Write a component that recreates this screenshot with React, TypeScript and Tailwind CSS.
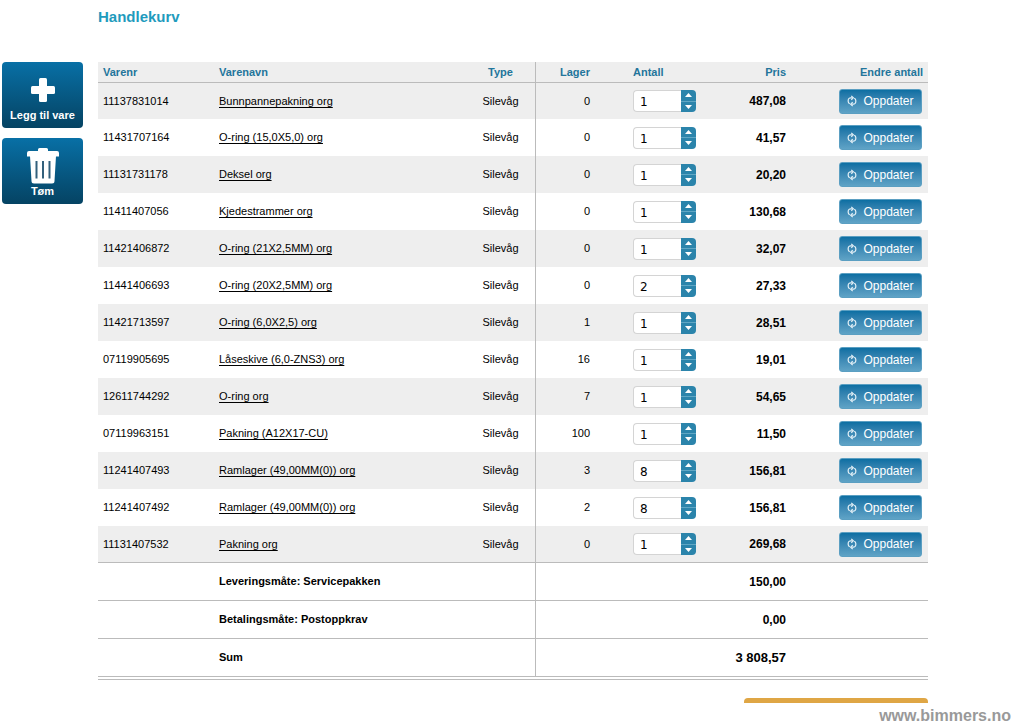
import React, { useState } from "react";

type Item = {
  nr: string;
  name: string;
  type: string;
  stock: number;
  qty: number;
  price: string;
};

const items: Item[] = [
  { nr: "11137831014", name: "Bunnpannepakning org", type: "Silevåg", stock: 0, qty: 1, price: "487,08" },
  { nr: "11431707164", name: "O-ring (15,0X5,0) org", type: "Silevåg", stock: 0, qty: 1, price: "41,57" },
  { nr: "11131731178", name: "Deksel org", type: "Silevåg", stock: 0, qty: 1, price: "20,20" },
  { nr: "11411407056", name: "Kjedestrammer org", type: "Silevåg", stock: 0, qty: 1, price: "130,68" },
  { nr: "11421406872", name: "O-ring (21X2,5MM) org", type: "Silevåg", stock: 0, qty: 1, price: "32,07" },
  { nr: "11441406693", name: "O-ring (20X2,5MM) org", type: "Silevåg", stock: 0, qty: 2, price: "27,33" },
  { nr: "11421713597", name: "O-ring (6,0X2,5) org", type: "Silevåg", stock: 1, qty: 1, price: "28,51" },
  { nr: "07119905695", name: "Låseskive (6,0-ZNS3) org", type: "Silevåg", stock: 16, qty: 1, price: "19,01" },
  { nr: "12611744292", name: "O-ring org", type: "Silevåg", stock: 7, qty: 1, price: "54,65" },
  { nr: "07119963151", name: "Pakning (A12X17-CU)", type: "Silevåg", stock: 100, qty: 1, price: "11,50" },
  { nr: "11241407493", name: "Ramlager (49,00MM(0)) org", type: "Silevåg", stock: 3, qty: 8, price: "156,81" },
  { nr: "11241407492", name: "Ramlager (49,00MM(0)) org", type: "Silevåg", stock: 2, qty: 8, price: "156,81" },
  { nr: "11131407532", name: "Pakning org", type: "Silevåg", stock: 0, qty: 1, price: "269,68" },
];

const totals = [
  { label: "Leveringsmåte: Servicepakken", value: "150,00", big: false },
  { label: "Betalingsmåte: Postoppkrav", value: "0,00", big: false },
  { label: "Sum", value: "3 808,57", big: true },
];

const PlusIcon = () => (
  <svg width="24" height="24" viewBox="0 0 24 24" fill="#fff" aria-hidden="true">
    <rect x="8" y="0" width="8" height="24" rx="1.5" />
    <rect x="0" y="8" width="24" height="8" rx="1.5" />
  </svg>
);

const TrashIcon = () => (
  <svg width="32" height="36" viewBox="0 0 32 36" aria-hidden="true">
    <path
      d="M11 3V1.500A1.500 1.500 0 0 1 12.500 0h7A1.500 1.500 0 0 1 21 1.500V3h9a2 2 0 0 1 2 2v3.500H0V5a2 2 0 0 1 2-2z"
      fill="#fff"
    />
    <path d="M3 8h26l-1.500 25a2.500 2.500 0 0 1-2.500 2.500H7a2.500 2.500 0 0 1-2.500-2.500z" fill="#fff" />
    <path d="M9.500 13v17.500M16 13v17.500M22.500 13v17.500" stroke="#33607c" strokeWidth="2" />
  </svg>
);

const RefreshIcon = () => (
  <svg width="10" height="12" viewBox="0 0 10 12" fill="none" stroke="#e6f2f8" strokeWidth="1.2" aria-hidden="true">
    <path d="M5.500 2.800H4A2.500 2.500 0 0 0 1.200 5.200v1.300A2.500 2.500 0 0 0 2.800 8.800" />
    <path d="M4.500 9.200H6A2.500 2.500 0 0 0 8.800 6.800V5.500A2.500 2.500 0 0 0 7.200 3.200" />
    <path d="M4.300 0.800L6.300 2.800L4.300 4.800M5.700 7.200L3.700 9.200L5.700 11.200" />
  </svg>
);

const SideButton: React.FC<{ label: string; icon: React.ReactNode }> = ({ label, icon }) => (
  <button
    type="button"
    className="flex h-[66px] w-full cursor-pointer flex-col items-center justify-end rounded bg-linear-to-b from-[#0870a6] to-[#054363] pb-1.5 text-[11px] leading-[14px] font-bold text-white"
  >
    {icon}
    <span>{label}</span>
  </button>
);

const Quantity: React.FC<{ value: number; label: string }> = ({ value, label }) => {
  const [qty, setQty] = useState(value);
  return (
    <div className="flex h-[22px] w-[63px]">
      <input
        type="text"
        aria-label={label}
        value={qty}
        onChange={(e) => setQty(Number(e.target.value) || 0)}
        className="w-12 rounded-l border border-r-0 border-[#d4d4d4] bg-white pt-0.5 pl-1.5 font-['DejaVu_Sans',sans-serif] text-xs text-black"
      />
      <div className="flex w-[15px] flex-col overflow-hidden rounded-r bg-[#2b84ab]">
        <button
          type="button"
          aria-label="Flere"
          onClick={() => setQty(qty + 1)}
          className="flex flex-1 items-center justify-center border-b border-[#5fa6c4]"
        >
          <svg width="7" height="4" viewBox="0 0 7 4" fill="#fff"><path d="M0 4L3.500 0L7 4z" /></svg>
        </button>
        <button
          type="button"
          aria-label="Færre"
          onClick={() => setQty(Math.max(0, qty - 1))}
          className="flex flex-1 items-center justify-center"
        >
          <svg width="7" height="4" viewBox="0 0 7 4" fill="#fff"><path d="M0 0L3.500 4L7 0z" /></svg>
        </button>
      </div>
    </div>
  );
};

const App: React.FC = () => {
  return (
    <div className="bg-white pr-[13px] pl-0.5 font-['Liberation_Sans',Arial,sans-serif] text-xs text-[#222]">
      <div className="flex gap-[15px] pr-[83px]">
        <aside className="mt-[62px] flex w-[81px] shrink-0 flex-col gap-2.5">
          <SideButton label="Legg til vare" icon={<span className="mb-1.5"><PlusIcon /></span>} />
          <SideButton label="Tøm" icon={<TrashIcon />} />
        </aside>

        <main className="min-w-0 flex-1">
          <h1 className="pt-2 pb-9 text-[15px] leading-[18px] font-bold text-[#1f9bbd]">Handlekurv</h1>

          <div className="border-b border-[#bbb] pb-0.5">
            <table className="w-full table-fixed border-separate border-spacing-0">
              <thead>
                <tr className="h-5 bg-[#eee] text-[11px] text-[#23759b]">
                  <th className="w-[116px] pl-[5px] text-left">Varenr</th>
                  <th className="pl-[5px] text-left">Varenavn</th>
                  <th className="w-[70px] border-r border-[#bbb] text-center">Type</th>
                  <th className="w-[54px] text-right">Lager</th>
                  <th className="w-[110px] pl-[43px] text-left">Antall</th>
                  <th className="w-[91px] pr-[5px] text-right">Pris</th>
                  <th className="w-[137px] pr-[5px] text-right">Endre antall</th>
                </tr>
              </thead>
              <tbody className="[&>tr:first-child>td]:border-t [&>tr:last-child>td]:border-b">
                {items.map((item) => (
                  <tr key={item.nr} className="h-[37px] odd:bg-[#eee] [&>td]:border-[#bbb]">
                    <td className="pl-[5px] text-[11px] text-black">{item.nr}</td>
                    <td className="pl-[5px] text-[11px] text-black">
                      <a href="#" className="underline underline-offset-2 [text-decoration-skip-ink:none]">
                        {item.name}
                      </a>
                    </td>
                    <td className="border-r text-center text-[11px] text-black">{item.type}</td>
                    <td className="text-right text-[11px] text-black">{item.stock}</td>
                    <td className="pl-[43px]">
                      <Quantity value={item.qty} label={`Antall ${item.nr}`} />
                    </td>
                    <td className="pr-[5px] text-right font-bold text-black">{item.price}</td>
                    <td className="pr-1.5">
                      <button
                        type="button"
                        className="ml-auto flex h-[25px] w-[83px] cursor-pointer items-center justify-center gap-1.5 rounded-[3px] border border-[#5b9fc2] bg-linear-to-b from-[#0b6fa3] to-[#5fa3c6] text-white"
                      >
                        <RefreshIcon />
                        Oppdater
                      </button>
                    </td>
                  </tr>
                ))}
              </tbody>
              <tfoot>
                {totals.map((row) => (
                  <tr key={row.label} className="h-[38px] font-bold text-black [&>*]:border-b [&>*]:border-[#bbb]">
                    <td />
                    <th className="pl-[5px] text-left text-[11px]">{row.label}</th>
                    <td className="border-r" />
                    <td />
                    <td />
                    <td className={row.big ? "pr-[5px] text-right text-[13px]" : "pr-[5px] text-right"}>
                      {row.value}
                    </td>
                    <td />
                  </tr>
                ))}
              </tfoot>
            </table>
          </div>

          <div className="mt-[18px] ml-auto h-[5px] w-[184px] rounded-t bg-[#dfa645]" />
        </main>
      </div>

      <footer className="mt-1.5 text-right text-base leading-[14px] font-bold text-[#999]">
        www.bimmers.no
      </footer>
    </div>
  );
};

export default App;
